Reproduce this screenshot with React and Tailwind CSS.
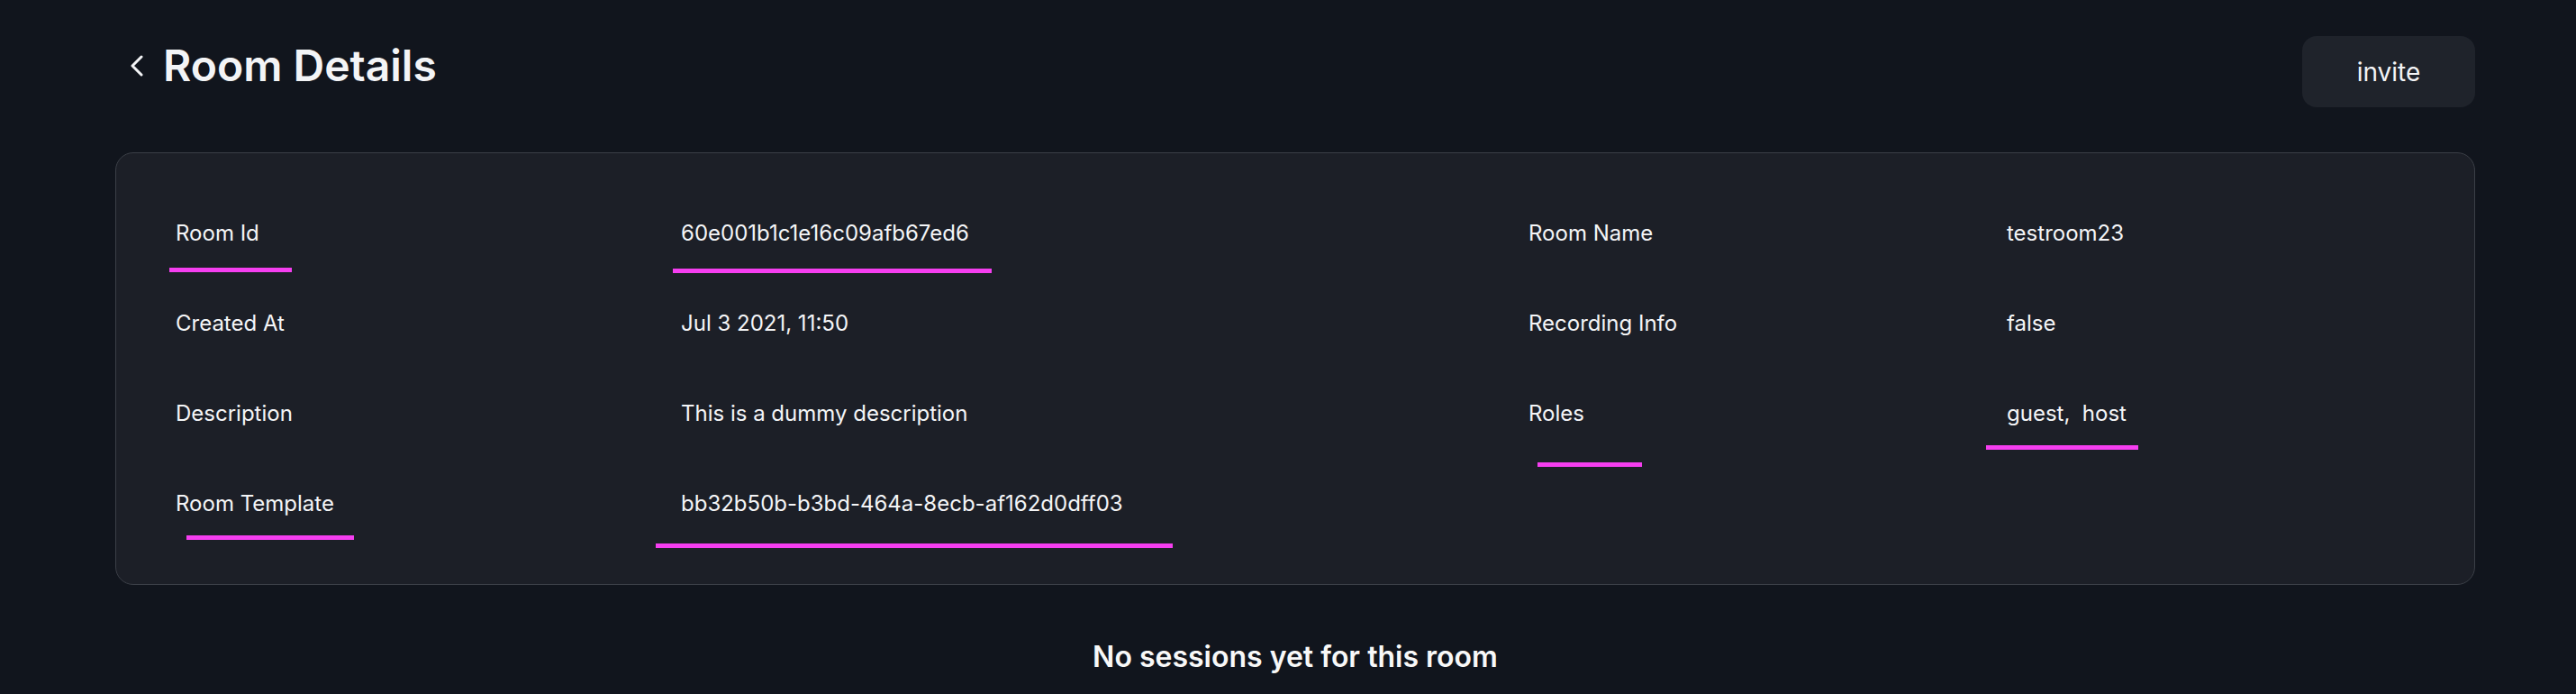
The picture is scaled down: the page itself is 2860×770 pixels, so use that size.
import React from 'react';

const rows = [
  [
    { text: 'Room Id', mark: 'left-[-7px] top-[88px] w-[136px]' },
    { text: '60e001b1c1e16c09afb67ed6', mark: 'left-[-9px] top-[89px] w-[354px]' },
    { text: 'Room Name' },
    { text: 'testroom23' },
  ],
  [
    { text: 'Created At' },
    { text: 'Jul 3 2021, 11:50' },
    { text: 'Recording Info' },
    { text: 'false' },
  ],
  [
    { text: 'Description' },
    { text: 'This is a dummy description' },
    { text: 'Roles', mark: 'left-[10px] top-[104px] w-[116px]' },
    { text: 'guest,  host', mark: 'left-[-23px] top-[85px] w-[169px]' },
  ],
  [
    { text: 'Room Template', mark: 'left-[12px] top-[85px] w-[186px]' },
    { text: 'bb32b50b-b3bd-464a-8ecb-af162d0dff03', mark: 'left-[-28px] top-[94px] w-[574px]' },
    { text: '' },
    { text: '' },
  ],
];

function Cell({ cell }) {
  return (
    <div className="relative h-[100px] flex items-center">
      <span className="whitespace-pre text-[24px] text-[#f4f5f7]">{cell.text}</span>
      {cell.mark && (
        <span className={`absolute h-[5px] bg-[#f53ef0] ${cell.mark}`} />
      )}
    </div>
  );
}

export default function App() {
  return (
    <div className="min-h-[770px] bg-[#11151d] pl-[128px] pr-[112px] pt-[40px] font-['Inter',sans-serif]">
      {/* header */}
      <div className="flex justify-between items-start">
        <div className="flex items-center mt-[4px] pl-[15px]">
          <svg width="18" height="24" viewBox="0 0 18 24" className="mr-[20px]" fill="none">
            <path d="M14 2 L4 12 L14 22" stroke="#f3f4f6" strokeWidth="3" strokeLinecap="round" strokeLinejoin="round" />
          </svg>
          <h1 className="text-[48px] leading-[58px] font-semibold text-[#f3f4f6]">Room Details</h1>
        </div>
        <button className="w-[192px] h-[79px] rounded-[16px] bg-[#1f232b] text-[28px] text-[#f3f4f6]">
          invite
        </button>
      </div>

      {/* details card */}
      <div className="mt-[50px] rounded-[20px] border border-[#3b3f47] bg-[#1c1f27] py-[39px] pl-[66px]">
        <div className="grid grid-cols-[561px_941px_531px_1fr]">
          {rows.map((row, i) =>
            row.map((cell, j) => <Cell key={`${i}-${j}`} cell={cell} />)
          )}
        </div>
      </div>

      <p className="mt-[56px] text-center text-[32px] font-semibold text-[#f8f8f8]">
        No sessions yet for this room
      </p>
    </div>
  );
}
